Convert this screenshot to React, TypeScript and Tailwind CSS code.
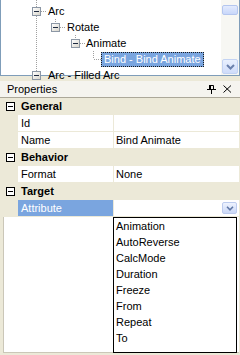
import { Fragment } from "react"

const font = "font-['Liberation_Sans',Arial,sans-serif]"

interface TreeRow {
    label: string
    pad: string
    gap: string
    selected?: boolean
}

const treeRows: TreeRow[] = [
    { label: "Arc", pad: "pl-[31px]", gap: "w-[7px]" },
    { label: "Rotate", pad: "pl-[50px]", gap: "w-[7px]" },
    { label: "Animate", pad: "pl-[70px]", gap: "w-[6px]" },
    { label: "Bind - Bind Animate", pad: "pl-[100px]", gap: "w-0", selected: true },
    { label: "Arc - Filled Arc", pad: "pl-[31px]", gap: "w-[7px]" },
]

const sections = [
    {
        name: "General",
        props: [
            { name: "Id", value: "" },
            { name: "Name", value: "Bind Animate" },
        ],
    },
    { name: "Behavior", props: [{ name: "Format", value: "None" }] },
    { name: "Target", props: [{ name: "Attribute", value: "", active: true }] },
]

const options = ["Animation", "AutoReverse", "CalcMode", "Duration", "Freeze", "From", "Repeat", "To"]

function ExpandBox() {
    return (
        <div className="flex h-[9px] w-[9px] shrink-0 items-center justify-center border border-[#8c97a5] bg-gradient-to-br from-white to-[#d9d6cc]">
            <div className="h-px w-[5px] bg-[#1e2a40]" />
        </div>
    )
}

function CategoryBox() {
    return (
        <div className="flex h-[9px] w-[9px] shrink-0 items-center justify-center border border-black bg-white">
            <div className="h-px w-[5px] bg-black" />
        </div>
    )
}

function TreeLines() {
    // dotted connectors of the tree, in panel pixels
    return (
        <svg className="pointer-events-none absolute left-[-1px] top-0" width="220" height="75">
            <g stroke="#a0a0a0" strokeWidth="1" strokeDasharray="1 1" fill="none">
                <line x1="36.5" y1="0" x2="36.5" y2="7" />
                <line x1="36.5" y1="16" x2="36.5" y2="71" />
                <line x1="41" y1="11.5" x2="47" y2="11.5" />
                <line x1="55.5" y1="19" x2="55.5" y2="23" />
                <line x1="60" y1="27.5" x2="66" y2="27.5" />
                <line x1="75.5" y1="35" x2="75.5" y2="39" />
                <line x1="80" y1="43.5" x2="86" y2="43.5" />
                <line x1="93.5" y1="51" x2="93.5" y2="59" />
                <line x1="94" y1="59.5" x2="101" y2="59.5" />
            </g>
        </svg>
    )
}

function Scrollbar() {
    return (
        <div className="flex w-[18px] shrink-0 flex-col justify-between bg-[#f7f7f3] px-[1px] pb-[1px] pt-[5px]">
            <div className="h-[10px] rounded-[2px] border border-[#b4c6ef] bg-gradient-to-b from-[#e3ebfd] to-[#c8d7fa]" />
            <div className="flex h-[15px] items-center justify-center rounded-[2px] border border-[#c3d3f3] bg-gradient-to-b from-[#e9f0fe] to-[#cfdcfa]">
                <svg width="9" height="6" viewBox="0 0 9 6">
                    <path d="M1 1 L4.5 4.5 L8 1" stroke="#6b81ad" strokeWidth="2" fill="none" />
                </svg>
            </div>
        </div>
    )
}

export default function App() {
    return (
        <div className={`relative flex h-[355px] w-[240px] flex-col overflow-hidden bg-[#ece9d8] text-[11px] text-black ${font}`}>
            {/* Tree panel */}
            <div className="relative flex h-[76px] shrink-0 border-x border-b border-[#7f9db9] bg-white">
                <TreeLines />
                <div className="relative flex-1 pt-[3px]">
                    {treeRows.map((row) => (
                        <div key={row.label} className={`flex h-4 items-center ${row.pad}`}>
                            {!row.selected && <ExpandBox />}
                            <div className={`${row.gap} shrink-0`} />
                            {row.selected ? (
                                <span className="flex h-[15px] items-center border border-dotted border-[#1a1a1a] bg-[#7aa5df] px-[2px] leading-none text-white">
                                    {row.label}
                                </span>
                            ) : (
                                <span className="leading-none">{row.label}</span>
                            )}
                        </div>
                    ))}
                </div>
                <Scrollbar />
            </div>

            {/* Properties header */}
            <div className="mt-[5px] flex h-[17px] shrink-0 items-center justify-between border-b border-[#aca899] bg-[#f5f4ef] pl-[7px] pr-[8px]">
                <span className="leading-none">Properties</span>
                <div className="flex items-center gap-[7px]">
                    <svg width="10" height="9" viewBox="0 0 10 9">
                        <path d="M3.5 0.5 H7.5 V4.5 H3.5 Z" fill="none" stroke="#000" />
                        <rect x="3" y="0" width="2" height="5" fill="#000" />
                        <rect x="1" y="4" width="9" height="1" fill="#000" />
                        <rect x="5" y="5" width="1" height="4" fill="#000" />
                    </svg>
                    <svg width="9" height="8" viewBox="0 0 9 8">
                        <path d="M0.5 0.5 L8 7.5 M8 0.5 L0.5 7.5" stroke="#000" strokeWidth="1" />
                    </svg>
                </div>
            </div>

            {/* Property grid */}
            <div className="flex flex-1 flex-col pr-[1px]">
                {sections.map((s) => (
                    <Fragment key={s.name}>
                        <div className="flex h-[17px] items-center border-b border-[#ece9d8] pl-[6px]">
                            <CategoryBox />
                            <span className="ml-[6px] font-bold leading-none">{s.name}</span>
                        </div>
                        {s.props.map((p) => (
                            <div key={p.name} className="flex h-[17px]">
                                <div className="w-[18px] shrink-0" />
                                <div
                                    className={`flex w-[96px] shrink-0 items-center border-b border-r border-[#ece9d8] pl-[3px] ${
                                        p.active ? "bg-[#7aa5df] text-white" : "bg-white"
                                    }`}
                                >
                                    <span className="leading-none">{p.name}</span>
                                </div>
                                <div className="flex flex-1 items-center justify-between border-b border-[#ece9d8] bg-white pl-[2px] pr-[2px]">
                                    <span className="leading-none">{p.value}</span>
                                    {p.active && (
                                        <div className="flex h-[12px] w-[15px] items-center justify-center rounded-[2px] border border-[#bccbee] bg-gradient-to-b from-[#eef3fe] to-[#cbd8f7]">
                                            <svg width="8" height="5" viewBox="0 0 8 5">
                                                <path d="M1 0.8 L4 3.8 L7 0.8" stroke="#5f77a6" strokeWidth="1.6" fill="none" />
                                            </svg>
                                        </div>
                                    )}
                                </div>
                            </div>
                        ))}
                    </Fragment>
                ))}
                <div className="mb-[2px] ml-[3px] flex-1 border-b border-l border-[#cbc7b8] bg-white" />
            </div>

            {/* Dropdown list */}
            <div className="absolute left-[113px] top-[217px] h-[136px] w-[124px] border border-black bg-white">
                {options.map((o) => (
                    <div key={o} className="flex h-4 items-center pl-[2px]">
                        <span className="leading-none">{o}</span>
                    </div>
                ))}
            </div>
        </div>
    )
}
